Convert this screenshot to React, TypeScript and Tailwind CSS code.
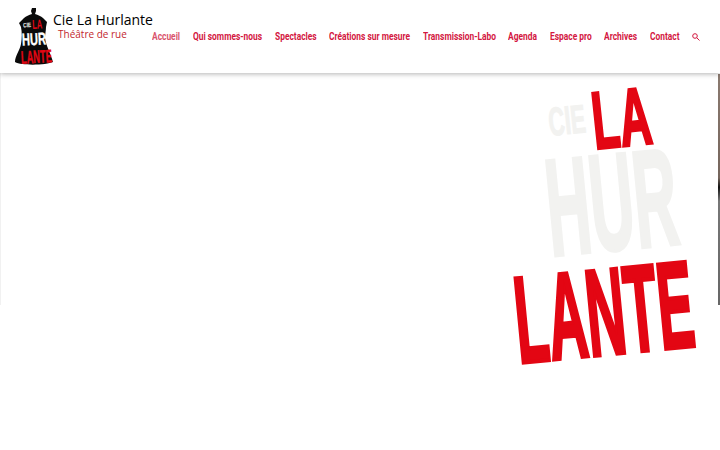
const navItems = [
  { label: "Accueil", width: "w-[28px]", active: true },
  { label: "Qui sommes-nous", width: "w-[69px]" },
  { label: "Spectacles", width: "w-[41px]" },
  { label: "Créations sur mesure", width: "w-[81px]" },
  { label: "Transmission-Labo", width: "w-[72px]" },
  { label: "Agenda", width: "w-[29px]" },
  { label: "Espace pro", width: "w-[41px]" },
  { label: "Archives", width: "w-[33px]" },
  { label: "Contact", width: "w-[29px]" },
];

const Logo = () => (
  <svg width="40" height="60" viewBox="14 7 40 60" className="shrink-0">
    <path
      d="M32 8 L36 8 L36 11 L35 14 C38 15 41 16 43 18 L47 22 L46 27 C46 31 45 34 45 38 C46 46 51 54 53 62 C47 65 22 66 15 62 C15 56 20 50 21 44 C22 38 22 32 21 27 L19 23 L24 18 C26 16 29 15 32 14 L31 11 Z"
      fill="#0a0a0a"
    />
    <g fontFamily="Liberation Sans, sans-serif" fontWeight="700" transform="rotate(-3 34 40)">
      <text x="24" y="27" fontSize="6.5" fill="#fff" textLength="8" lengthAdjust="spacingAndGlyphs">CIE</text>
      <text x="33" y="29" fontSize="13" fill="#e30613" textLength="10" lengthAdjust="spacingAndGlyphs">LA</text>
      <text x="22" y="45" fontSize="17" fill="#fff" stroke="#fff" strokeWidth="0.4" textLength="24" lengthAdjust="spacingAndGlyphs">HUR</text>
      <text x="20" y="63" fontSize="18" fill="#e30613" stroke="#e30613" strokeWidth="0.4" textLength="31" lengthAdjust="spacingAndGlyphs">LANTE</text>
    </g>
  </svg>
);

const BigMark = () => (
  <svg
    width="220"
    height="300"
    viewBox="500 74 220 300"
    className="absolute right-0 top-0"
  >
    <g fontFamily="Liberation Sans, sans-serif" fontWeight="700">
      <text
        transform="translate(550 137) rotate(-6)"
        fontSize="40"
        fill="#f2f2f0"
        stroke="#f2f2f0"
        strokeWidth="1"
        textLength="37"
        lengthAdjust="spacingAndGlyphs"
      >
        CIE
      </text>
      <text
        transform="translate(595 150) rotate(-6)"
        fontSize="81"
        fill="#e30613"
        stroke="#e30613"
        strokeWidth="3"
        textLength="59"
        lengthAdjust="spacingAndGlyphs"
      >
        LA
      </text>
      <text
        transform="translate(551 257) rotate(-5.5)"
        fontSize="138"
        fill="#f2f2f0"
        stroke="#f2f2f0"
        strokeWidth="3.5"
        textLength="131"
        lengthAdjust="spacingAndGlyphs"
      >
        HUR
      </text>
      <text
        transform="translate(519 364) rotate(-5.5)"
        fontSize="123"
        fill="#e30613"
        stroke="#e30613"
        strokeWidth="4"
        textLength="179"
        lengthAdjust="spacingAndGlyphs"
      >
        LANTE
      </text>
    </g>
  </svg>
);

export default function App() {
  return (
    <div className="h-[450px] w-[720px] overflow-hidden bg-white">
      <header className="relative z-10 flex h-[73px] items-start bg-white shadow-[0_1px_5px_rgba(0,0,0,0.3)]">
        <div className="ml-[14px] mt-[7px]">
          <Logo />
        </div>
        <div className="-ml-[1px] mt-[11px] w-[99px] shrink-0 whitespace-nowrap">
          <p className="font-['Open_Sans',sans-serif] text-[14px] leading-[17px] text-black">
            Cie La Hurlante
          </p>
          <p className="ml-[5px] font-['Open_Sans',sans-serif] text-[10px] leading-[13px] text-[#c21f2e]">
            Théâtre de rue
          </p>
        </div>
        <nav className="mt-[30px] flex items-center gap-[13px]">
          {navItems.map((item) => (
            <a key={item.label} className={`block ${item.width} whitespace-nowrap`}>
              <span
                className={`block origin-left scale-x-[0.84] font-['Roboto',sans-serif] text-[10px] font-bold leading-[14px] ${
                  item.active ? "text-[#d9536c]" : "text-[#d3173f]"
                }`}
              >
                {item.label}
              </span>
            </a>
          ))}
          <svg width="8" height="8" viewBox="0 0 8 8" fill="none" stroke="#d3173f" strokeWidth="1">
            <circle cx="3" cy="3" r="2.3" />
            <path d="M4.8 4.8 L7.5 7.5" />
          </svg>
        </nav>
      </header>
      <section className="relative flex h-[232px] justify-between border-l border-[#f1f1f1]">
        <div className="ml-auto mt-[1px] h-[231px] w-[2px] bg-[linear-gradient(#8b7a70,#75655c_45%,#111_49%,#777_55%,#666)]" />
        <BigMark />
      </section>
    </div>
  );
}
